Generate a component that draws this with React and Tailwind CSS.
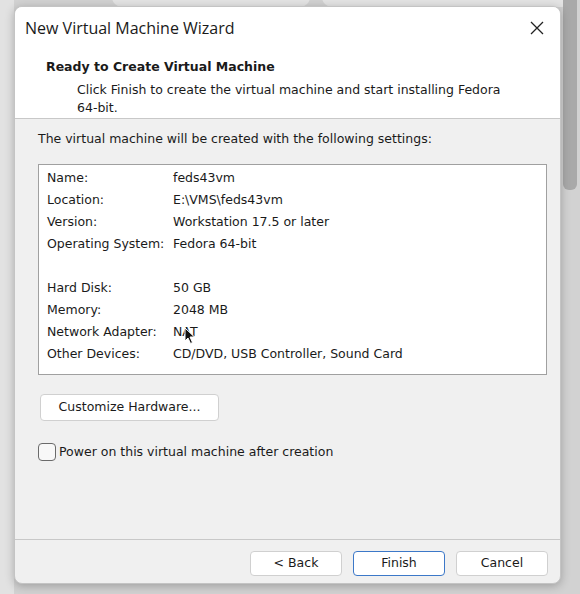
import React from "react";

const rows = [
  ["Name:", "feds43vm"],
  ["Location:", "E:\\VMS\\feds43vm"],
  ["Version:", "Workstation 17.5 or later"],
  ["Operating System:", "Fedora 64-bit"],
  null,
  ["Hard Disk:", "50 GB"],
  ["Memory:", "2048 MB"],
  ["Network Adapter:", "NAT"],
  ["Other Devices:", "CD/DVD, USB Controller, Sound Card"],
];

export default function App() {
  const ui = { fontFamily: "Tahoma, 'DejaVu Sans', sans-serif" };
  return (
    <div className="relative w-[580px] h-[594px] overflow-hidden bg-[#d2d2d2]">
      {/* background desktop shapes */}
      <div className="absolute left-[112px] top-[-20px] w-[198px] h-[27px] rounded-b-[10px] bg-[#e4e4e4]" />
      <div className="absolute left-[322px] top-[-20px] w-[250px] h-[27px] rounded-b-[10px] bg-[#e4e4e4]" />
      <div className="absolute left-0 top-0 w-[14px] h-[594px] bg-[#e2e2e2]" />
      <div className="absolute left-[563px] top-0 w-[14px] h-[190px] rounded-b-[6px] bg-[#a9a9a9]" />

      <div
        className="absolute left-[14px] top-[6px] w-[547px] h-[578px] rounded-[8px] bg-[#f0f0f0] border border-[#c4c4c4] shadow-[0_2px_10px_rgba(0,0,0,0.25)] overflow-hidden flex flex-col text-[12.5px] text-[#1a1a1a]"
        style={ui}
      >
        {/* header */}
        <div className="bg-white border-b border-[#c8c8c8] h-[112px] flex flex-col">
          <div className="flex items-center justify-between h-[42px] pl-[10px] pr-[14px]">
            <span className="text-[16px] text-[#1a1a1a]" style={{ fontFamily: "'Open Sans', 'Noto Sans', sans-serif" }}>
              New Virtual Machine Wizard
            </span>
            <svg width="14" height="14" viewBox="0 0 14 14" className="mr-[2px]">
              <path d="M1 1 L13 13 M13 1 L1 13" stroke="#222" strokeWidth="1.3" />
            </svg>
          </div>
          <div className="pl-[31px] pt-[9px] font-bold">Ready to Create Virtual Machine</div>
          <div className="pl-[62px] pt-[4px] leading-[18px] w-[500px]">
            Click Finish to create the virtual machine and start installing Fedora 64-bit.
          </div>
        </div>

        {/* body */}
        <div className="flex-1 flex flex-col pl-[23px] pr-[13px] pt-[11px]">
          <div className="leading-[18px]">The virtual machine will be created with the following settings:</div>
          <div className="mt-[16px] h-[211px] bg-white border border-[#a0a0a0] pl-[8px] pt-[2px]">
            {rows.map((r, i) =>
              r ? (
                <div key={i} className="flex h-[22px] items-center">
                  <span className="w-[126px]">{r[0]}</span>
                  <span>{r[1]}</span>
                </div>
              ) : (
                <div key={i} className="h-[22px]" />
              )
            )}
          </div>
          <button className="mt-[19px] ml-[2px] w-[179px] h-[27px] bg-white border border-[#d0d0d0] rounded-[4px] text-[12.5px] text-[#1a1a1a]" style={ui}>
            Customize Hardware...
          </button>
          <label className="mt-[22px] flex items-center gap-[3px]">
            <span className="w-[18px] h-[18px] border border-[#6a6a6a] rounded-[4px] bg-[#f8f8f8]" />
            <span>Power on this virtual machine after creation</span>
          </label>
        </div>

        {/* footer */}
        <div className="border-t border-[#c8c8c8] h-[44px] flex items-start justify-end gap-[11px] pr-[12px] pt-[11px]">
          <button className="w-[92px] h-[25px] bg-white border border-[#d0d0d0] rounded-[4px] text-[12.5px]" style={ui}>&lt; Back</button>
          <button className="w-[92px] h-[25px] bg-white border border-[#3c78c8] rounded-[4px] text-[12.5px]" style={ui}>Finish</button>
          <button className="w-[92px] h-[25px] bg-white border border-[#d0d0d0] rounded-[4px] text-[12.5px]" style={ui}>Cancel</button>
        </div>
      </div>

      {/* mouse pointer */}
      <svg className="absolute left-[184px] top-[327px]" width="12" height="18" viewBox="0 0 12 18">
        <path d="M1 1 L1 14 L4 11 L6.5 16.5 L8.5 15.5 L6 10 L10.5 10 Z" fill="#111" stroke="#fff" strokeWidth="1" />
      </svg>
    </div>
  );
}
